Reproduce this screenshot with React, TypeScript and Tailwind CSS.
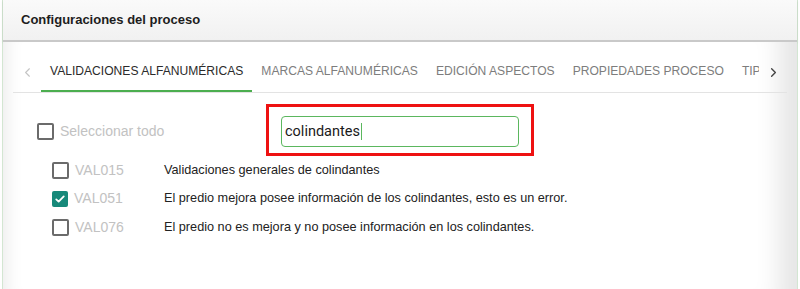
import { ChevronLeft, ChevronRight } from "lucide-react";

const tabs = [
  "VALIDACIONES ALFANUMÉRICAS",
  "MARCAS ALFANUMÉRICAS",
  "EDICIÓN ASPECTOS",
  "PROPIEDADES PROCESO",
  "TIPOS DE PREDIO",
];

const rows = [
  { code: "VAL015", text: "Validaciones generales de colindantes", checked: false },
  { code: "VAL051", text: "El predio mejora posee información de los colindantes, esto es un error.", checked: true },
  { code: "VAL076", text: "El predio no es mejora y no posee información en los colindantes.", checked: false },
];

function Box({ checked }: { checked?: boolean }) {
  if (checked) {
    return (
      <span className="flex h-[16px] w-[16px] items-center justify-center rounded-[2px] bg-[#17897a]">
        <svg viewBox="0 0 16 16" className="h-[12px] w-[12px]" fill="none" stroke="white" strokeWidth={2.4} strokeLinecap="round" strokeLinejoin="round">
          <path d="M3 8.5l3.2 3L13 4.5" />
        </svg>
      </span>
    );
  }
  return <span className="block h-[17px] w-[17px] rounded-[2px] border-2 border-[#6b6b6b] bg-white" />;
}

export default function App() {
  return (
    <div className="h-[289px] w-[800px] overflow-hidden bg-white font-['Liberation_Sans',Arial,sans-serif]">
      <div className="mx-[2px] flex h-full flex-col border-x border-[#d3e6d2]">
        {/* cabecera */}
        <div className="flex h-[42px] shrink-0 items-center border-b-2 border-[#c9c9c9] bg-gradient-to-b from-[#fafafa] to-[#f1f1f1] pl-[18px] shadow-[0_1px_2px_rgba(0,0,0,0.12)]">
          <h2 className="text-[13px] font-bold text-[#1d1d1d]">Configuraciones del proceso</h2>
        </div>

        <div className="flex-1 bg-white shadow-[inset_22px_0_18px_-18px_rgba(0,0,0,0.08),inset_-40px_0_24px_-22px_rgba(0,0,0,0.1)]">
          {/* pestañas */}
          <div className="mx-[10px] mt-[10px] flex h-[41px] items-stretch border-b border-[#e3e3e3]">
            <div className="flex w-[28px] items-center justify-center">
              <ChevronLeft className="h-[15px] w-[15px] text-[#c4c4c4]" strokeWidth={1.8} />
            </div>
            <div className="flex flex-1 overflow-hidden">
              {tabs.map((t, i) => (
                <div
                  key={t}
                  className={`flex shrink-0 items-center whitespace-nowrap px-[9px] pt-[1px] text-[12.1px] ${
                    i === 0 ? "border-b-2 border-[#4cae4f] text-[#2b2b2b]" : "border-b-2 border-transparent text-[#7d7d7d]"
                  }`}
                >
                  {t}
                </div>
              ))}
            </div>
            <div className="flex w-[28px] items-center justify-center">
              <ChevronRight className="h-[15px] w-[15px] text-[#444]" strokeWidth={2.2} />
            </div>
          </div>

          {/* buscador */}
          <div className="mt-[11px] flex items-center">
            <label className="ml-[34px] mt-[3px] flex w-[229px] items-center gap-[6px]">
              <Box />
              <span className="text-[14px] text-[#c2c2c2]">Seleccionar todo</span>
            </label>
            <div className="w-[268px] border-[3px] border-[#ee1111] px-[12px] pb-[6px] pt-[9px]">
              <div className="flex h-[31px] items-center rounded-[4px] border-[1.5px] border-[#5bb75e] px-[3px] font-['Roboto',sans-serif] text-[14.5px] text-[#1a1a1a]">
                colindantes
                <span className="ml-[1px] h-[17px] w-[1px] bg-[#5bb75e]" />
              </div>
            </div>
          </div>

          {/* lista */}
          <div className="flex flex-col">
            {rows.map((r) => (
              <div key={r.code} className="flex h-[28.5px] items-center pl-[49px]">
                <div className="flex w-[112px] items-center gap-[6px]">
                  <Box checked={r.checked} />
                  <span className="text-[14px] text-[#c2c2c2]">{r.code}</span>
                </div>
                <span className="text-[12.7px] text-[#222]">{r.text}</span>
              </div>
            ))}
          </div>
        </div>
      </div>
    </div>
  );
}
